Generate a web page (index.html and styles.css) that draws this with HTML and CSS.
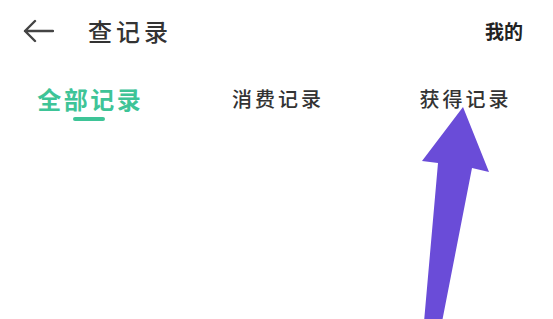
FILE: index.html
```html
<!DOCTYPE html>
<html lang="zh">
<head>
<meta charset="utf-8">
<link rel="stylesheet" href="styles.css">
</head>
<body>
<div class="page">
  <header class="topbar">
    <svg class="back" width="32" height="24" viewBox="0 0 32 24">
      <path d="M13 2 L3 12 L13 22 M3 12 H31" fill="none" stroke="#444" stroke-width="2.4" stroke-linecap="round" stroke-linejoin="round"/>
    </svg>
    <div class="title">查记录</div>
    <div class="mine">我的</div>
  </header>
  <nav class="tabs">
    <div class="tab active"><span class="label">全部记录</span><span class="bar"></span></div>
    <div class="tab"><span class="label">消费记录</span></div>
    <div class="tab"><span class="label">获得记录</span></div>
  </nav>
  <svg class="pointer" width="553" height="319" viewBox="0 0 553 319">
    <polygon points="463,107 489,172 472,168 442,322 424,322 438,163 422,161" fill="#6a4cd8"/>
  </svg>
</div>
</body>
</html>
```

FILE: styles.css
```css
html, body {
  margin: 0;
  padding: 0;
  background: #fff;
}
body {
  font-family: "Noto Sans CJK SC", "Noto Sans", sans-serif;
  color: #333;
}
.page {
  position: relative;
  width: 553px;
  height: 319px;
  overflow: hidden;
}
.topbar {
  height: 62px;
  display: flex;
  align-items: center;
  padding: 0 30px 0 22px;
}
.back {
  flex: none;
}
.title {
  margin-left: 34px;
  font-size: 24px;
  line-height: 30px;
  letter-spacing: 4px;
  font-weight: 500;
  color: #333;
}
.mine {
  margin-left: auto;
  font-size: 19px;
  font-weight: 700;
  line-height: 24px;
  color: #222;
}
.tabs {
  display: grid;
  grid-template-columns: 178px 178px 178px;
  column-gap: 9.5px;
  padding-top: 23px;
}
.tab {
  display: flex;
  flex-direction: column;
  align-items: center;
}
.label {
  font-size: 20px;
  line-height: 28px;
  letter-spacing: 3px;
  margin-right: -3px;
  font-weight: 500;
  color: #333;
}
.tab.active .label {
  font-size: 24px;
  letter-spacing: 2.5px;
  margin-right: -2.5px;
  font-weight: 700;
  color: #3ec497;
}
.bar {
  margin-top: 4px;
  width: 32px;
  height: 4px;
  border-radius: 2px;
  background: #3ec497;
}
.pointer {
  position: absolute;
  left: 0;
  top: 0;
}
```
